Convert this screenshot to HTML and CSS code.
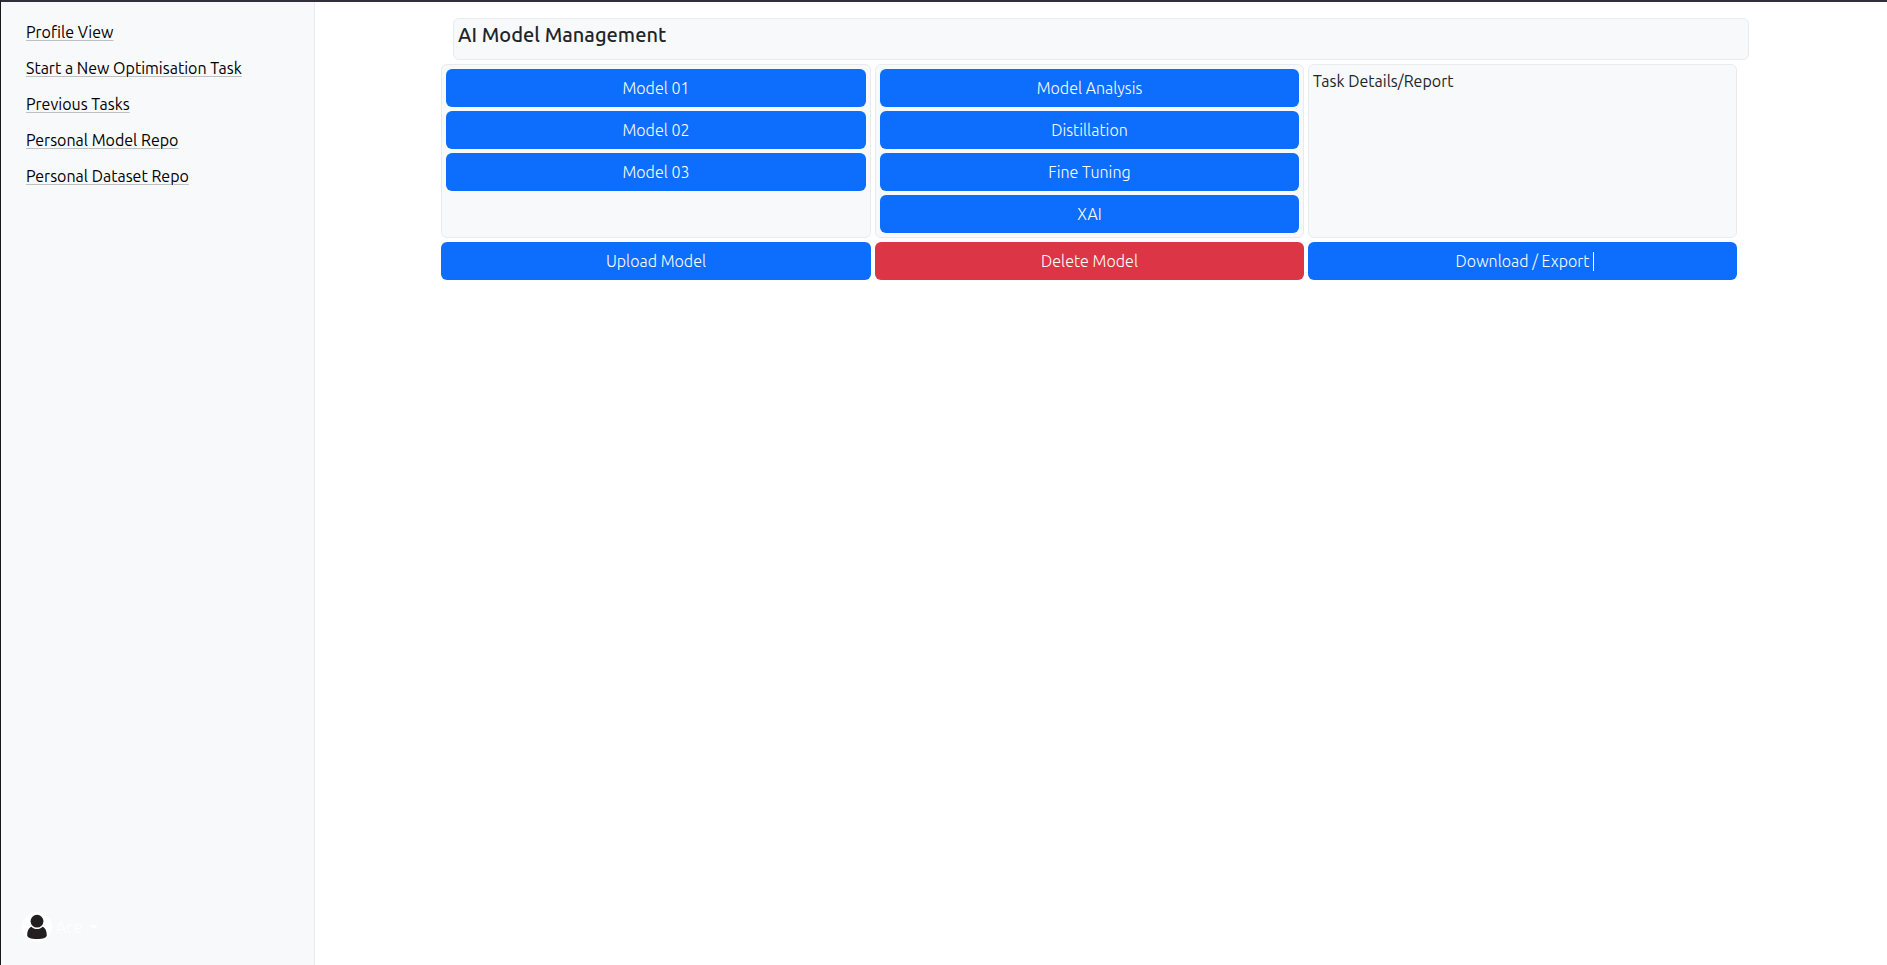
FILE: index.html
```
<!DOCTYPE html>
<html lang="en">
<head>
<meta charset="utf-8">
<title>AI Model Management</title>
<link rel="stylesheet" href="styles.css">
</head>
<body>
<div class="app">
  <aside class="sidebar">
    <nav class="nav">
      <a class="link" href="#">Profile View</a>
      <a class="link" href="#">Start a New Optimisation Task</a>
      <a class="link" href="#">Previous Tasks</a>
      <a class="link" href="#">Personal Model Repo</a>
      <a class="link" href="#">Personal Dataset Repo</a>
    </nav>
    <div class="user">
      <svg class="avatar" width="30" height="30" viewBox="0 0 30 30">
        <circle cx="15" cy="15" r="15" fill="#fff"/>
        <circle cx="15" cy="9.2" r="6.4" fill="#231f20"/>
        <path fill="#231f20" d="M9.400 14.800c1.500 1.500 3.400 2.300 5.600 2.300s4.100-.8 5.600-2.300c2.600 1 4.200 4.300 4.200 8.400 0 2.400-3.400 3.800-9.800 3.800s-9.800-1.400-9.800-3.800c0-4.100 1.600-7.400 4.200-8.400z"/>
      </svg>
      <span class="name">Ace</span>
      <span class="caret"></span>
    </div>
  </aside>
  <main class="main">
    <header class="header"><h5 class="title">AI Model Management</h5></header>
    <div class="grid">
      <section class="panel">
        <button class="btn">Model 01</button>
        <button class="btn">Model 02</button>
        <button class="btn">Model 03</button>
      </section>
      <section class="panel">
        <button class="btn">Model Analysis</button>
        <button class="btn">Distillation</button>
        <button class="btn">Fine Tuning</button>
        <button class="btn">XAI</button>
      </section>
      <section class="panel">Task Details/Report</section>
      <button class="btn">Upload Model</button>
      <button class="btn danger">Delete Model</button>
      <button class="btn">Download / Export<span class="cursor"></span></button>
    </div>
  </main>
</div>
</body>
</html>
```
FILE: styles.css
```
* { box-sizing: border-box; }
body {
  margin: 0;
  background: #fff;
  color: #212529;
  font: 400 16px/24px Ubuntu, "Noto Sans", sans-serif;
}
.app {
  display: flex;
  height: 100vh;
  border-top: 2px solid #332e3b;
  border-left: 1px solid #1b181d;
}
.sidebar {
  display: flex;
  flex-direction: column;
  justify-content: space-between;
  width: 314px;
  padding: 18px 21px 23px;
  background: #f8f9fa;
  border-right: 1px solid #e9ecef;
}
.nav {
  display: flex;
  flex-direction: column;
  align-items: flex-start;
  gap: 12px;
  padding-left: 4px;
}
.link {
  color: #000;
  text-decoration: underline 1px #bfc0c2;
  text-underline-offset: 2px;
}
.user {
  display: flex;
  align-items: center;
  height: 30px;
  color: #fff;
}
.name { margin-left: 4px; font-weight: 350; }
.caret {
  margin-left: 8px;
  border: 4px solid transparent;
  border-top-color: #fff;
  border-bottom: 0;
}
.main {
  display: flex;
  flex-direction: column;
  gap: 4px;
  width: 1296px;
  margin: 16px 0 0 126px;
}
.header {
  height: 42px;
  margin: 0 -12px 0 12px;
  padding: 4px;
  background: #f8f9fa;
  border: 1px solid #e9ecef;
  border-radius: 6px;
}
.title { margin: 0; font-size: 20px; font-weight: 480; line-height: 24px; letter-spacing: .03px; }
.grid { display: grid; grid-template-columns: 430px 429px 429px; gap: 4px; }
.panel {
  display: flex;
  flex-direction: column;
  gap: 4px;
  height: 174px;
  padding: 4px;
  background: #f8f9fa;
  border: 1px solid #e9ecef;
  border-radius: 6px;
}
.btn {
  display: flex;
  align-items: center;
  justify-content: center;
  flex: none;
  height: 38px;
  padding: 0;
  border: 0;
  border-radius: 6px;
  background: #0d6efd;
  color: #fff;
  font: inherit;
  font-weight: 350;
  letter-spacing: .04px;
}
.danger { background: #dc3545; }
.cursor { width: 1px; height: 19px; margin: 0 -5px 0 4px; background: #fff; }
```
